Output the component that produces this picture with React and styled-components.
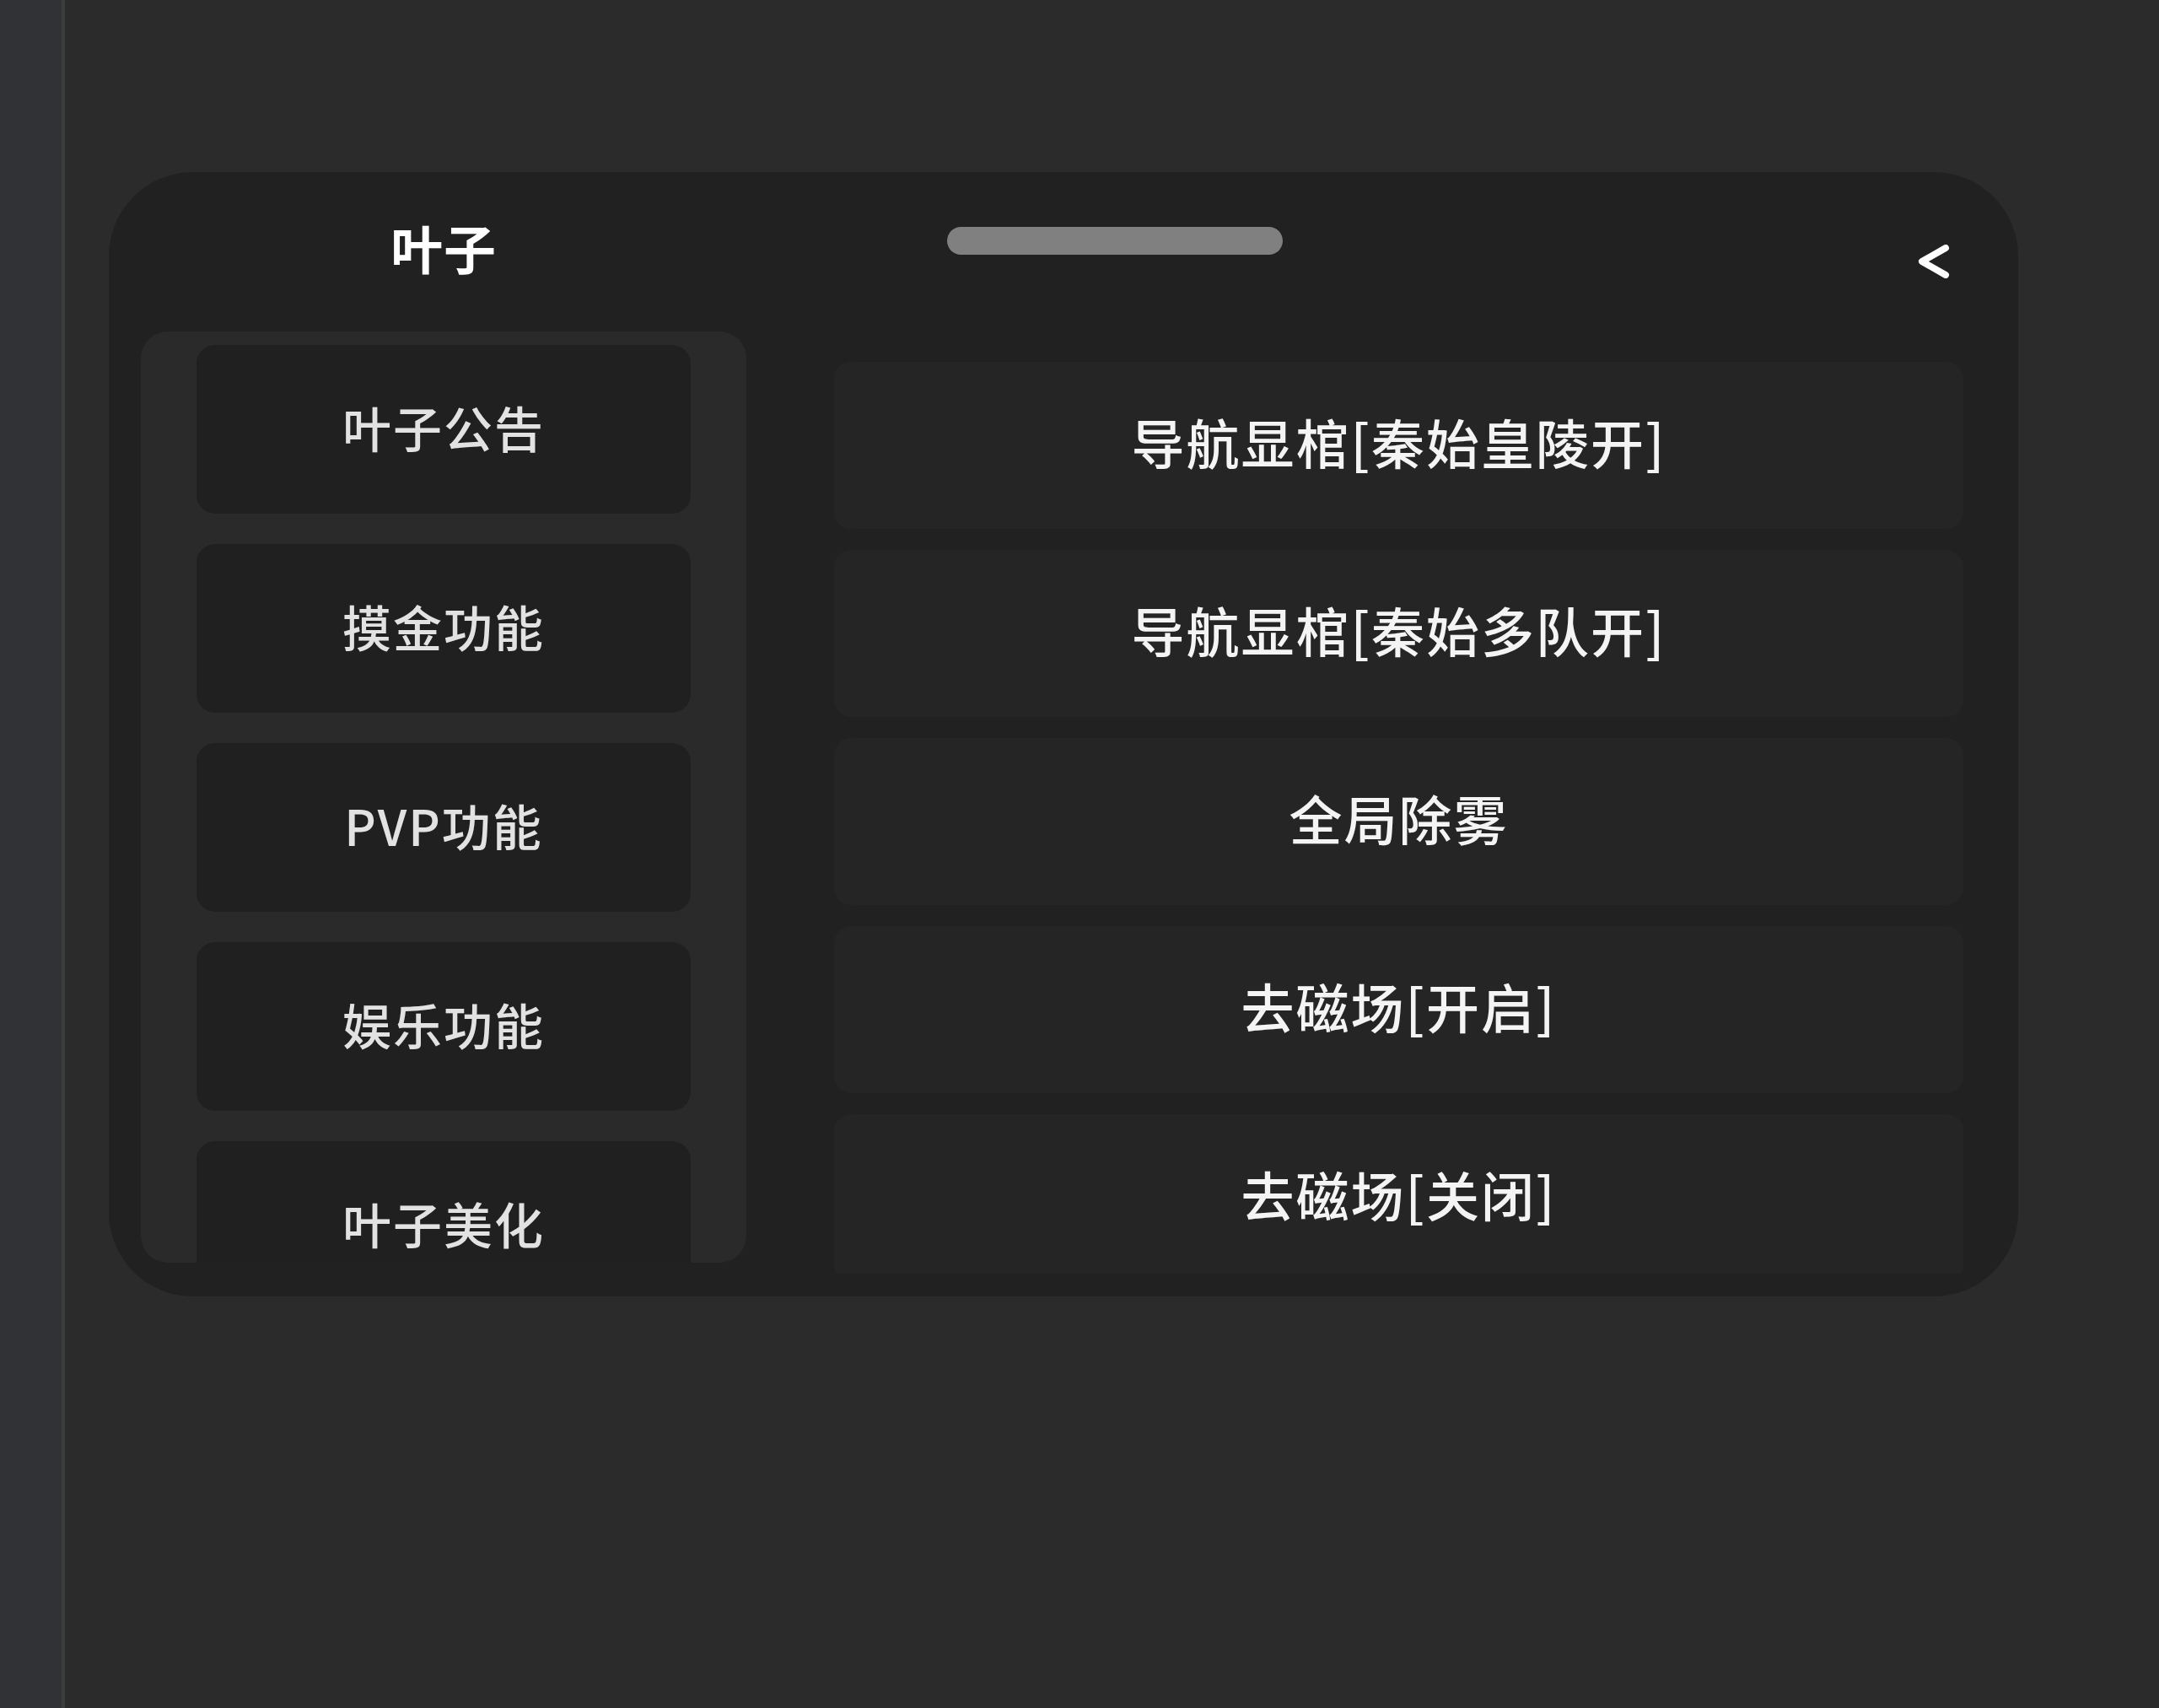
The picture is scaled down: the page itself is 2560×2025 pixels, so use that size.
import React from "react";
import styled, { createGlobalStyle } from "styled-components";

const Global = createGlobalStyle`
  html, body { margin: 0; padding: 0; background: #2b2b2b; }
  body { font-family: "Noto Sans CJK SC", "Noto Sans", sans-serif; }
  * { box-sizing: border-box; }
`;

const Page = styled.div`
  display: flex;
  width: 2560px;
  height: 2025px;
  background: #2b2b2b;
  overflow: hidden;
`;

const Rail = styled.div`
  width: 77px;
  flex: none;
  background: #313235;
  border-right: 4px solid #3b3c3e;
`;

const Main = styled.div`
  flex: 1;
  padding: 204px 0 0 52px;
`;

const Panel = styled.div`
  width: 2264px;
  height: 1333px;
  background: #212121;
  border-radius: 100px;
  padding: 0 65px 0 38px;
  display: flex;
  flex-direction: column;
  overflow: hidden;
`;

const Header = styled.div`
  height: 189px;
  flex: none;
  display: flex;
  align-items: flex-start;
`;

const Title = styled.div`
  width: 718px;
  flex: none;
  padding-top: 58px;
  text-align: center;
  font-size: 62px;
  line-height: 62px;
  font-weight: 700;
  color: #ffffff;
  letter-spacing: 1px;
`;

const Handle = styled.div`
  width: 398px;
  height: 33px;
  margin: 65px 0 0 238px;
  border-radius: 17px;
  background: #808080;
`;

const BackButton = styled.div`
  margin: 86px 16px 0 auto;
  width: 38px;
  height: 40px;
  display: flex;
`;

const Body = styled.div`
  flex: 1;
  display: flex;
  gap: 104px;
  min-height: 0;
`;

const Sidebar = styled.div`
  width: 718px;
  height: 1104px;
  flex: none;
  background: #2a2a2a;
  border-radius: 32px;
  padding: 16px 66px 0 66px;
  display: flex;
  flex-direction: column;
  gap: 36px;
  overflow: hidden;
`;

const NavButton = styled.div`
  flex: none;
  height: 200px;
  padding-bottom: 6px;
  border-radius: 22px;
  background: #202020;
  display: flex;
  align-items: center;
  justify-content: center;
  font-size: 58px;
  font-weight: 500;
  color: #e2e2e2;
  letter-spacing: 2px;
`;

const List = styled.div`
  flex: 1;
  margin-top: 36px;
  height: 1081px;
  display: flex;
  flex-direction: column;
  gap: 25px;
  overflow: hidden;
`;

const Item = styled.div`
  flex: none;
  height: 198px;
  padding-bottom: 12px;
  border-radius: 20px;
  background: #252525;
  display: flex;
  align-items: center;
  justify-content: center;
  font-size: 63px;
  font-weight: 500;
  color: #f4f4f4;
  letter-spacing: 2px;
`;

const navItems = ["叶子公告", "摸金功能", "PVP功能", "娱乐功能", "叶子美化"];
const listItems = [
  "导航显棺[秦始皇陵开]",
  "导航显棺[秦始多队开]",
  "全局除雾",
  "去磁场[开启]",
  "去磁场[关闭]",
];

export default function App() {
  return (
    <>
      <Global />
      <Page>
        <Rail />
        <Main>
          <Panel>
            <Header>
              <Title>叶子</Title>
              <Handle />
              <BackButton>
                <svg width="38" height="40" viewBox="0 0 38 40">
                  <polyline
                    points="33,4 5,20 33,36"
                    fill="none"
                    stroke="#ffffff"
                    strokeWidth="8"
                    strokeLinecap="round"
                    strokeLinejoin="round"
                  />
                </svg>
              </BackButton>
            </Header>
            <Body>
              <Sidebar>
                {navItems.map((t) => (
                  <NavButton key={t}>{t}</NavButton>
                ))}
              </Sidebar>
              <List>
                {listItems.map((t) => (
                  <Item key={t}>{t}</Item>
                ))}
              </List>
            </Body>
          </Panel>
        </Main>
      </Page>
    </>
  );
}
